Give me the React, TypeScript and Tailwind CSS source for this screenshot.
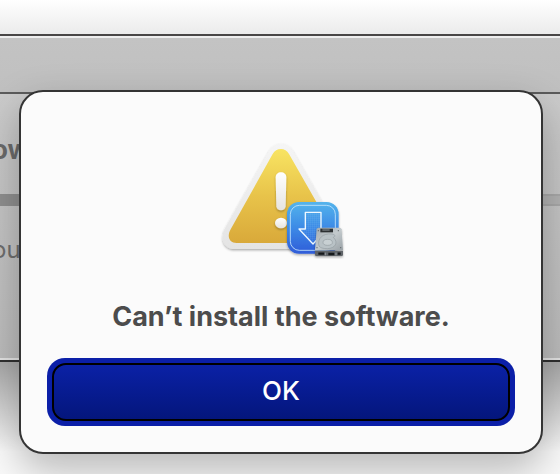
import { useState } from "react";

function AlertIcon() {
  return (
    <svg width="142" height="140" viewBox="0 0 426 420" aria-hidden="true">
      <defs>
        <linearGradient id="rim" x1="0" y1="0" x2="0" y2="1">
          <stop offset="0" stopColor="#f5f5f5" />
          <stop offset="1" stopColor="#e4e4e4" />
        </linearGradient>
        <linearGradient id="yellow" x1="0" y1="0" x2="0" y2="1">
          <stop offset="0" stopColor="#f8e462" />
          <stop offset="0.5" stopColor="#e8c34a" />
          <stop offset="1" stopColor="#d9a93a" />
        </linearGradient>
        <linearGradient id="mark" x1="0" y1="0" x2="0" y2="1">
          <stop offset="0" stopColor="#ffffff" />
          <stop offset="1" stopColor="#e6e4df" />
        </linearGradient>
        <linearGradient id="blue" x1="0" y1="0" x2="0" y2="1">
          <stop offset="0" stopColor="#54b4ec" />
          <stop offset="0.5" stopColor="#3c8ae6" />
          <stop offset="1" stopColor="#2f5cd8" />
        </linearGradient>
        <linearGradient id="metal" x1="0" y1="0" x2="1" y2="1">
          <stop offset="0" stopColor="#a3aaaf" />
          <stop offset="0.5" stopColor="#c3cacd" />
          <stop offset="1" stopColor="#99a1a6" />
        </linearGradient>
        <pattern id="grid" width="6" height="6" patternUnits="userSpaceOnUse">
          <path d="M0 0H6M0 0V6" stroke="#8cc8f8" strokeWidth="1" opacity="0.6" />
        </pattern>
        <filter id="drop" x="-10%" y="-10%" width="120%" height="120%">
          <feDropShadow dx="0" dy="4" stdDeviation="3" floodOpacity="0.32" />
        </filter>
      </defs>

      {/* warning triangle */}
      <path
        d="M213 41C230 41 241 50 250 65L381 293C400 327 386 357 350 357H76C41 357 28 327 46 293L176 65C185 50 196 41 213 41Z"
        fill="url(#rim)"
        filter="url(#drop)"
      />
      <path
        d="M213 57C223 57 231 62 237 72L365 296C377 318 369 339 346 339H80C57 339 50 319 62 298L188 72C194 62 202 57 213 57Z"
        fill="url(#yellow)"
      />
      <g filter="url(#drop)">
        <path
          d="M197 142C197 133 204 127 213 127C222 127 229 133 229 142L227 229C226 237 221 241 213 241C205 241 200 237 199 229Z"
          fill="url(#mark)"
        />
        <ellipse cx="213" cy="279" rx="18" ry="16" fill="url(#mark)" />
      </g>

      {/* installer badge */}
      <rect x="231" y="216" width="155" height="155" rx="36" fill="url(#blue)" filter="url(#drop)" />
      <rect x="241" y="226" width="135" height="135" rx="27" fill="none" stroke="#c7e7fc" strokeWidth="2.5" />
      <path d="M286 247H333V297H351L309 342L267 297H286Z" fill="url(#grid)" stroke="#eef8ff" strokeWidth="4" strokeLinejoin="round" />

      {/* hard drive */}
      <g filter="url(#drop)">
        <path d="M325 293H389Q394 293 395 298L399 361H315L320 298Q321 293 325 293Z" fill="url(#metal)" />
        <path d="M315 362H399V374Q399 378 395 378H319Q315 378 315 374Z" fill="#5e6468" />
      </g>
      <path d="M325 371H343M355 372H373M383 371H392" stroke="#16191b" strokeWidth="7" />
      <path d="M346 368V376M378 368V376" stroke="#a9afb2" strokeWidth="2" />
      <rect x="331" y="296" width="38" height="11" fill="#2c3032" />
      <path d="M337 300H359" stroke="#8f979b" strokeWidth="3" />
      <path
        d="M327 348C321 326 338 309 366 312C376 314 378 319 370 322C387 338 375 355 352 356C339 356 330 353 327 348Z"
        fill="#b9c2c6"
        stroke="#949da1"
        strokeWidth="2"
      />
      <ellipse cx="353" cy="337" rx="14" ry="9" fill="#c8d0d3" stroke="#949da1" strokeWidth="2" />
      <g fill="#62696d">
        <circle cx="325" cy="302" r="2" />
        <circle cx="385" cy="302" r="2" />
        <circle cx="321" cy="353" r="2" />
        <circle cx="392" cy="353" r="2" />
      </g>
    </svg>
  );
}

function InstallerWindow() {
  return (
    <section className="border-y-2 border-t-[#484646] border-b-[#303030]">
      <div className="h-14 border-t-2 border-[#eeeeee] bg-linear-to-b from-[#c3c3c3] to-[#c0c0c0]" />
      <div className="h-[268px] overflow-hidden border-t-2 border-b-2 border-t-[#5c5c5c] border-b-[#e4e4e4] bg-linear-to-b from-[#cbcbcb] to-[#bcbcbc] pt-10">
        <h1 className="-ml-2 text-[26px] leading-8 font-bold text-[#6a6a6a]">ow</h1>
        <div className="mt-7 flex h-3">
          <div className="w-1/2 bg-[#8f8f8f]" />
          <div className="w-1/2 border-y-2 border-[#a8a8a8] bg-[#b2b2b2]" />
        </div>
        <p className="mt-7 -ml-2 text-[24px] leading-8 text-[#6e6e6e]">ou</p>
      </div>
    </section>
  );
}

export default function App() {
  const [open, setOpen] = useState(true);

  return (
    <main className="relative flex min-h-screen flex-col overflow-hidden bg-[#e0e0e0] font-[Inter,sans-serif]">
      <div className="h-[34px] bg-linear-to-b from-white to-[#ebebeb]" />
      <InstallerWindow />
      <div className="flex-1 bg-linear-to-b from-[#a8a8a8] to-[#fafafa] to-80%" />

      {open && (
        <div
          role="alertdialog"
          aria-labelledby="alert-title"
          className="absolute top-[90px] right-[17px] left-[19px] flex flex-col items-center rounded-3xl border-2 border-[#343434] bg-[#fbfbfb] px-[26px] pt-[38px] pb-[26px] shadow-[0_16px_40px_rgba(0,0,0,0.27)]"
        >
          <AlertIcon />
          <h2 id="alert-title" className="mt-[31px] text-[27px] leading-8 font-bold text-[#4c4c4c]">
            Can’t install the software.
          </h2>
          <div className="mt-[25px] w-full rounded-[18px] bg-[#0b1fa8] p-[5px]">
            <button
              type="button"
              onClick={() => setOpen(false)}
              className="h-[58px] w-full rounded-[14px] border-2 border-black bg-linear-to-b from-[#0b21a6] to-[#04167c] pb-0.5 text-[26px] leading-8 font-medium text-white"
            >
              OK
            </button>
          </div>
        </div>
      )}
    </main>
  );
}
